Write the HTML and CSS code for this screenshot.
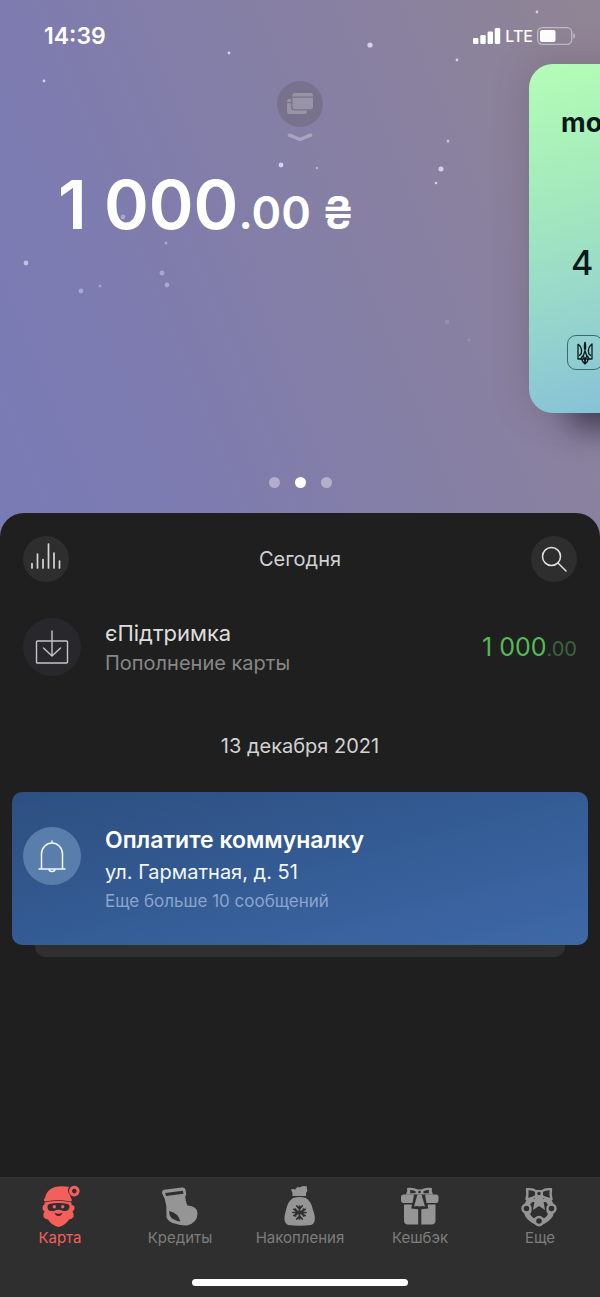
FILE: index.html
```html
<!DOCTYPE html>
<html lang="ru">
<head>
<meta charset="utf-8">
<meta name="viewport" content="width=device-width, initial-scale=1">
<title>Карта</title>
<link rel="stylesheet" href="styles.css">
</head>
<body>
<div class="app">
  <header class="hero">
    <svg class="snow" width="600" height="513" viewBox="0 0 600 513" fill="#d5d1ec" aria-hidden="true">
      <circle cx="370" cy="45" r="2.6"/><circle cx="229" cy="53" r="1.4"/><circle cx="44" cy="81" r="1.4"/>
      <circle cx="537" cy="12" r="1.4"/><circle cx="457" cy="60" r="1.4"/><circle cx="281" cy="165" r="2.4"/>
      <circle cx="317" cy="168" r="1.2" opacity=".6"/><circle cx="448" cy="141" r="1.5" opacity=".8"/>
      <circle cx="441" cy="169" r="2.5"/><circle cx="436" cy="183" r="1.3"/><circle cx="123" cy="217" r="2.4" opacity=".5"/>
      <circle cx="166" cy="243" r="1.5" opacity=".5"/><circle cx="26" cy="263" r="2.4" opacity=".8"/>
      <circle cx="162" cy="273" r="2.4" opacity=".5"/><circle cx="167" cy="285" r="2.4" opacity=".5"/>
      <circle cx="81" cy="291" r="2.4" opacity=".5"/><circle cx="100" cy="286" r="1.4" opacity=".5"/>
      <circle cx="447" cy="322" r="2.2" opacity=".2"/><circle cx="469" cy="340" r="1.4" opacity=".2"/>
    </svg>
    <div class="status">
      <span class="time">14:39</span>
      <div class="signals">
        <svg width="28" height="18" viewBox="0 0 28 18" fill="#fff" aria-hidden="true">
          <rect x="0" y="11" width="5.4" height="6" rx="1.3"/><rect x="7.3" y="8" width="5.4" height="9" rx="1.3"/>
          <rect x="14.6" y="4.5" width="5.4" height="12.5" rx="1.3"/><rect x="21.8" y="1" width="5.4" height="16" rx="1.3"/>
        </svg>
        <span class="network">LTE</span>
        <svg width="39" height="18" viewBox="0 0 39 18" aria-hidden="true">
          <rect x=".7" y=".7" width="34" height="16.6" rx="4.5" fill="none" stroke="#fff" stroke-opacity=".45" stroke-width="1.3"/>
          <rect x="3" y="3" width="15.5" height="12" rx="2" fill="#fff"/>
          <path d="M36.4 6v6q1.6-.8 1.6-3t-1.6-3" fill="#fff" opacity=".5"/>
        </svg>
      </div>
    </div>
    <div class="carousel">
      <section class="slide">
        <div class="pull">
          <button class="cards-button" type="button" aria-label="Все карты">
            <svg width="28" height="24" viewBox="0 0 28 24" fill="#9994a5" aria-hidden="true">
              <path d="M1 9.500Q1 7 3.500 7H5v3H1zM1 11.200h4V15q0 3.500 3.500 3.500H21v1Q21 22 18.500 22h-15Q1 22 1 19.500z"/>
              <path d="M6.500 3.500Q6.500 1 9 1h15.500Q27 1 27 3.500v1H6.500zM6.500 5.700H27v9q0 2.500-2.500 2.500H9q-2.500 0-2.500-2.500z"/>
            </svg>
          </button>
          <svg width="26" height="9" viewBox="0 0 26 9" fill="none" stroke="#aaa5bd" stroke-width="3.5" stroke-linecap="round" stroke-linejoin="round" aria-hidden="true"><path d="M2.500 2.200L13 6.500l10.500-4.300"/></svg>
        </div>
        <p class="balance">1 000<span class="balance-minor">.00 ₴</span></p>
      </section>
      <article class="bank-card">
        <span class="brand">mo</span>
        <span class="card-number">4 4</span>
        <span class="emblem">
          <svg width="16" height="24" viewBox="0 0 16 24" fill="none" stroke="#07191a" stroke-width="1.3" stroke-linejoin="round" aria-hidden="true">
            <path d="M1 3v15h14V3q-4 3-3.500 8 .2 3 2.500 3.500M1 3q4 3 3.500 8-.2 3-2.500 3.500M8 1v11M8 1q-1.300 6 0 8 1.300-2 0-8M8 10q-1 5-4.500 8M8 10q1 5 4.500 8M4.500 15.500Q8 14 8 23q0-9 3.500-7.500M4.500 18q1 3 3.500 5 2.500-2 3.500-5"/>
          </svg>
        </span>
      </article>
    </div>
    <div class="dots"><i class="dot"></i><i class="dot dot-active"></i><i class="dot"></i></div>
  </header>

  <main class="sheet">
    <div class="sheet-head">
      <button class="round" type="button" aria-label="Статистика">
        <svg width="32" height="32" viewBox="0 0 32 32" stroke="#d6d6d6" stroke-width="1.7" stroke-linecap="round" aria-hidden="true"><path d="M2 20.500v4.500M7.500 11v14M13 16.500V25M18.500 1v24M24 10v15M29.500 18v7"/></svg>
      </button>
      <h2 class="day">Сегодня</h2>
      <button class="round" type="button" aria-label="Поиск">
        <svg width="28" height="28" viewBox="0 0 28 28" fill="none" stroke="#e4e4e4" stroke-width="1.5" stroke-linecap="round" aria-hidden="true"><circle cx="11.5" cy="11.5" r="9"/><path d="M18 18l8 8"/></svg>
      </button>
    </div>
    <div class="operation">
      <span class="op-icon">
        <svg width="34" height="36" viewBox="0 0 34 36" fill="none" stroke="#c4c4c6" stroke-width="1.4" stroke-linecap="round" stroke-linejoin="round" aria-hidden="true"><rect x="1.5" y="12" width="31" height="22" rx="1"/><path d="M17 2v25M8.500 19l8.500 8 8.500-8"/></svg>
      </span>
      <div class="op-text">
        <p class="op-title">єПідтримка</p>
        <p class="op-sub">Пополнение карты</p>
      </div>
      <p class="amount">1 000<span class="amount-minor">.00</span></p>
    </div>
    <h2 class="day">13 декабря 2021</h2>
    <div class="notice-stack">
      <article class="notice">
        <span class="op-icon bell">
          <svg width="28" height="34" viewBox="0 0 28 34" fill="none" stroke="#f0f5fc" stroke-width="1.5" stroke-linecap="round" stroke-linejoin="round" aria-hidden="true"><path d="M1 30h26M3.500 30V15a10.500 11 0 0 1 21 0v15M14 4V2M11 30q0 2.500 3 2.500t3-2.500"/></svg>
        </span>
        <div>
          <h3 class="notice-title">Оплатите коммуналку</h3>
          <p class="notice-text">ул. Гарматная, д. 51</p>
          <p class="notice-more">Еще больше 10 сообщений</p>
        </div>
      </article>
      <div class="stack-edge"></div>
    </div>
  </main>

  <footer class="tabbar">
    <nav class="tabs">
      <a class="tab tab-active" href="#card">
        <svg width="40" height="42" viewBox="0 0 40 42" fill="currentColor" aria-hidden="true">
          <path fill-rule="evenodd" d="M34.300.8a5.300 5.300 0 1 0 .01 0zM34.300 3.800a2.300 2.300 0 1 1-.01 0z"/>
          <path d="M5 13Q6 5 15 2q6-1.600 14-.2-2 3-.5 6 1.500 2 2.500 5.200 2 3-.5 3.500-12.500-3-25 0-3-.5-.5-3.500z"/>
          <path d="M4.500 17.500Q18 14 31.500 17.500V20q3 0 3 3 0 2.500-2 3.500 2 3 1 5.500-1.500 2-4.500 2.500-3.500 6-10.500 7.500-7-1.500-10.500-7.500-3-.5-4.500-2.500-1-2.500 1-5.500-2-1-2-3.500 0-3 2-3.500z"/>
          <path fill="#2f2f2f" d="M9 19q9-2 19 0 2 1 1.500 3.500T26 26h-3q-2-1.200-4.500-1.200T14 26h-3q-3 0-3.500-3.500Q7 20 9 19zM14.500 28q4 1.500 8 0-1 3-4 3t-4-3z"/>
          <circle cx="14.3" cy="21.8" r="1.7"/><circle cx="22.7" cy="21.8" r="1.7"/>
        </svg>
        <span>Карта</span>
      </a>
      <a class="tab" href="#credits">
        <svg width="40" height="42" viewBox="0 0 40 42" fill="currentColor" aria-hidden="true">
          <path fill-rule="evenodd" d="M4 4.800L22 2.500q2.800-.3 3.500 2.200l.7 4.300q.2 2.300-2.100 2.800L7 13.900q-2.700.3-3.500-2.400L2 8Q1.800 5.300 4 4.800zM5.200 8l.8 3L23.500 8.700l-.7-3z"/>
          <path fill-rule="evenodd" d="M4.500 12.500L25 9q.5 8 2.500 11.500 9.800.7 10 7.700 0 9.500-10.500 12.300-5 .3-14.500-2.500-7-2.500-6-9.500Q7 21 4.500 12.500zM9.300 26q-1 8.500 11 10.500-2-8.500-11-10.500z"/>
        </svg>
        <span>Кредиты</span>
      </a>
      <a class="tab" href="#savings">
        <svg width="40" height="42" viewBox="0 0 40 42" fill="currentColor" aria-hidden="true">
          <path d="M12.500 11q.5-3-1.500-6.500 2.200-1 4.200 0Q17.500 1 19.500 2.500q3-2.500 7.500-1-.5 2 .5 4-2 2-1.500 5.500z"/>
          <path d="M13 13q7-2 13 0 5 3 7 12 4.500 12.500-2 15-11.500 1.500-23 0-6-2.500-2-15Q8 16 13 13z"/>
          <g stroke="#2f2f2f" stroke-width="1.7" stroke-linecap="round" fill="none"><path d="M19.500 21v13M13.800 24.300l11.400 6.400M25.200 24.300l-11.400 6.400M16.800 21l2.700 3 2.700-3M16.800 34l2.700-3 2.700 3M13 27.500h3.500l-1-3.500M26 27.500h-3.500l1-3.500M15.500 31l1-3.500M23.500 31l-1-3.500"/></g>
        </svg>
        <span>Накопления</span>
      </a>
      <a class="tab" href="#cashback">
        <svg width="40" height="42" viewBox="0 0 40 42" fill="currentColor" aria-hidden="true">
          <path fill-rule="evenodd" d="M7 3q6-1 11 1.500h3Q26 2 32 3q-1 3 1 6.500H6Q8 6 7 3zM10 5q.5 2 0 3.300h5.500V6.200Q13 5 10 5zM29 5q-3 0-5.500 1.200v2.100H29Q28.500 7 29 5z"/>
          <path d="M3 9.500h11L12.500 18H3q-2-.2-2-2.500V12q0-2.500 2-2.500zM25 9.500h11q2.500 0 2.500 2.500v3.500q0 2.500-2.500 2.500h-9.500zM17.500 9.500h4l3.500 12q-3-1.200-5.500 0-2.500-1.200-5.500 0z"/>
          <path d="M4 19.500h8l-.8 4 7 .8V39.500H8q-4 0-4-4zM35.500 19.500h-8l.8 4-7 .8v15.200h10.200q4 0 4-4z"/>
          <circle cx="19.5" cy="7" r="1.3" fill="#2f2f2f"/>
        </svg>
        <span>Кешбэк</span>
      </a>
      <a class="tab" href="#more">
        <svg width="40" height="42" viewBox="0 0 40 42" fill="none" stroke="currentColor" stroke-width="2.4" stroke-linejoin="round" aria-hidden="true">
          <path d="M7 14L3 22l2 9q4 6 11 9l3 1.500 3-1.500q7-3 11-9l2-9-4-8z" fill="currentColor" stroke="none"/>
          <path d="M12.500 17q-3 2-2.500 5 3 4 0 7 2 4 5.500 4.500 3.500-4 7 0 3.500-.5 5.500-4.500-3-3 0-7 .5-3-2.500-5z" fill="#2f2f2f" stroke="none"/>
          <path d="M7 4.200q6-.5 9 2h6q3-2.500 9-2-1 4 .5 10-7-1-9.500-3.200h-6Q13.500 13.200 6.500 14.200 8 8 7 4.200z" fill="#2f2f2f"/>
          <path d="M15.500 11h7l2.500 14-6-4-6 4z" fill="currentColor" stroke="none"/>
          <g fill="#2f2f2f"><circle cx="6.5" cy="23.5" r="4"/><circle cx="31.5" cy="23.5" r="4"/><circle cx="19" cy="36" r="4"/></g>
          <path d="M15 5h8v7h-8z" fill="currentColor" stroke="none"/><circle cx="19" cy="8.500" r="1.7" fill="#2f2f2f" stroke="none"/>
        </svg>
        <span>Еще</span>
      </a>
    </nav>
    <div class="home-bar"></div>
  </footer>
</div>
</body>
</html>
```

FILE: styles.css
```css
* { box-sizing: border-box; margin: 0; padding: 0; }
body { background: #1f1f1f; font-family: Inter, "Liberation Sans", sans-serif; color: #d8d8d8; }
svg { display: block; flex: none; }
button { border: 0; }
.app { min-height: 100vh; display: flex; flex-direction: column; overflow: hidden; }

.hero {
  position: relative;
  overflow: hidden;
  padding-bottom: 49px;
  background: linear-gradient(68deg, #797bb6 0%, #7d7bb0 25%, #847fa7 50%, #8a819f 75%, #908593 100%);
}
.snow { position: absolute; top: 0; left: 0; }
.status { position: relative; height: 64px; padding: 8px 24px 0 44px; display: flex; align-items: center; justify-content: space-between; color: #fff; }
.time { font-size: 23px; font-weight: 600; }
.signals { display: flex; align-items: center; gap: 4px; }
.network { font-size: 16px; font-weight: 500; }
.carousel { position: relative; display: grid; grid-template-columns: 1fr 71px; }
.slide { display: flex; flex-direction: column; gap: 20px; padding-top: 17px; }
.pull { padding-left: 71px; display: flex; flex-direction: column; align-items: center; gap: 6px; }
.cards-button { width: 46px; height: 46px; border-radius: 50%; display: grid; place-items: center; background: #79728f; }
.balance { padding-left: 58px; font-size: 68px; line-height: 84px; font-weight: 600; color: #fff; white-space: nowrap; }
.balance-minor { font-size: 45px; font-weight: 600; }
.bank-card {
  width: 560px; height: 349px; padding: 43px 32px; border-radius: 24px;
  display: flex; flex-direction: column; align-items: flex-start;
  color: #07191a;
  background: linear-gradient(165deg, #b4fdb6 0%, #a4e9bd 28%, #97d8ca 50%, #88c4d6 72%, #88bcd8 100%);
  box-shadow: 26px 30px 30px -14px rgba(40, 30, 55, .65), 0 0 36px rgba(80, 65, 80, .3);
}
.brand { font-size: 27px; line-height: 32px; font-weight: 700; }
.card-number { margin-top: 104px; padding-left: 10px; font-size: 34px; line-height: 40px; font-weight: 500; }
.emblem { margin: auto 0 0 6px; width: 36px; height: 35px; border: 1px solid #3c6970; border-radius: 9px; display: grid; place-items: center; }
.dots { margin-top: 64px; display: flex; justify-content: center; gap: 15px; }
.dot { width: 11px; height: 11px; border-radius: 50%; background: #b3aecd; }
.dot-active { background: #fff; }

.sheet { position: relative; flex: 1; margin-top: -24px; padding: 23px 12px 0; border-radius: 24px 24px 0 0; background: #1f1f1f; }
.sheet-head { display: flex; justify-content: space-between; align-items: center; padding: 0 11px; }
.round { width: 46px; height: 46px; border-radius: 50%; background: #2e2e2e; display: grid; place-items: center; }
.day { font-size: 20px; line-height: 24px; font-weight: 400; text-align: center; color: #d2d2d2; }
.operation { display: flex; align-items: center; gap: 24px; padding: 0 11px; margin: 34px 0 56px; }
.op-icon { flex: none; width: 58px; height: 58px; border-radius: 50%; display: grid; place-items: center; background: #28282c; }
.op-text { flex: 1; padding-top: 2px; }
.op-title { font-size: 22px; line-height: 30px; color: #dedede; }
.op-sub { font-size: 20px; line-height: 30px; color: #878787; }
.amount { font-size: 25px; color: #55b957; white-space: nowrap; }
.amount-minor { font-size: 20px; color: #3a653c; }
.notice-stack { margin-top: 34px; }
.notice { display: flex; gap: 24px; padding: 32px 11px 31px; border-radius: 10px; background: linear-gradient(165deg, #2e4f80 0%, #335a92 45%, #3e69a8 100%); }
.bell { margin-top: 3px; background: #5a7eab; }
.notice-title { font-size: 23px; line-height: 32px; font-weight: 600; color: #fff; }
.notice-text { font-size: 20px; line-height: 32px; color: #f2f6fc; }
.notice-more { font-size: 17px; line-height: 26px; color: #8ba5cb; }
.stack-edge { height: 12px; margin: 0 23px; border-radius: 0 0 10px 10px; background: #2f2f2f; }

.tabbar { position: relative; padding: 7px 0 11px; background: #2f2f2f; border-top: 1px solid #343434; }
.tabs { display: grid; grid-template-columns: repeat(5, 1fr); }
.tab { display: flex; flex-direction: column; align-items: center; gap: 1px; color: #959595; font-size: 15px; line-height: 20px; font-weight: 400; text-decoration: none; }
.tab span { color: #7d7d7d; }
.tab-active, .tab-active span { color: #f55f5b; }
.home-bar { width: 36%; height: 7px; margin: 31px auto 0; border-radius: 4px; background: #fff; }
```
